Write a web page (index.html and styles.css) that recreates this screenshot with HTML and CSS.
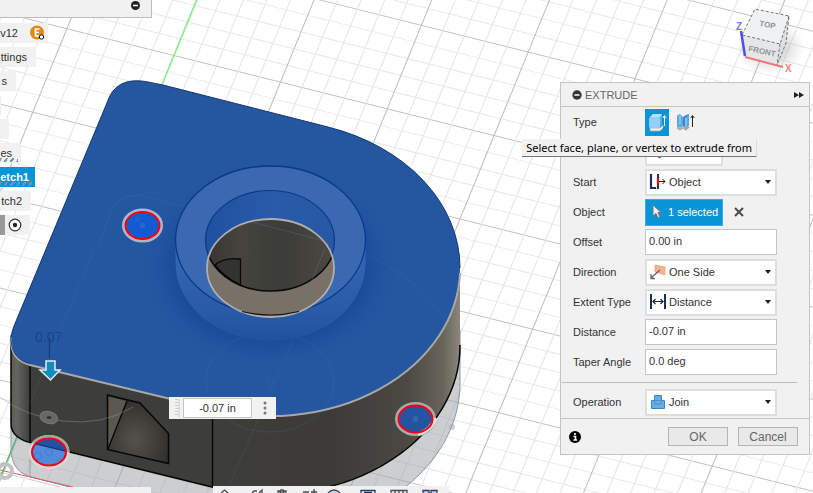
FILE: index.html
```html
<!DOCTYPE html>
<html lang="en">
<head>
<meta charset="utf-8">
<title>Extrude</title>
<link rel="stylesheet" href="styles.css">
</head>
<body>
<main class="workspace">
<svg class="scene" viewBox="0 0 813 493" preserveAspectRatio="xMinYMin slice" aria-hidden="true">
  <defs>
    <g id="across"><path class="minor" d="M-200 20H900M-200 40H900M-200 60H900M-200 80H900"/><path class="major" d="M-200 0H900"/></g>
    <g id="down"><path class="minor" d="M20 -400V700M40 -400V700M60 -400V700M80 -400V700"/><path class="major" d="M0 -400V700"/></g>
    <linearGradient id="side" x1="10" x2="461" y1="0" y2="0" gradientUnits="userSpaceOnUse">
      <stop offset="0" stop-color="#5b5a57"/><stop offset=".015" stop-color="#656460"/><stop offset=".045" stop-color="#3d3d3a"/>
      <stop offset=".45" stop-color="#3d3d39"/><stop offset=".72" stop-color="#3d3b38"/><stop offset=".88" stop-color="#4b4944"/><stop offset=".96" stop-color="#68645b"/><stop offset="1" stop-color="#8d887a"/>
    </linearGradient>
    <linearGradient id="hub" x1="0" x2="0" y1="245" y2="345" gradientUnits="userSpaceOnUse">
      <stop offset="0" stop-color="#3669b2"/><stop offset=".65" stop-color="#285ba8"/><stop offset="1" stop-color="#1e509d"/>
    </linearGradient>
    <linearGradient id="bore" x1="205" x2="335" y1="0" y2="0" gradientUnits="userSpaceOnUse">
      <stop offset="0" stop-color="#2050a0"/><stop offset=".5" stop-color="#295baa"/><stop offset="1" stop-color="#2858a4"/>
    </linearGradient>
    <linearGradient id="wall" x1="207" x2="334" y1="0" y2="0" gradientUnits="userSpaceOnUse">
      <stop offset="0" stop-color="#35342f"/><stop offset=".25" stop-color="#45443f"/><stop offset=".6" stop-color="#3c3c38"/><stop offset="1" stop-color="#4c4943"/>
    </linearGradient>
    <radialGradient id="shade">
      <stop offset=".65" stop-color="#184998"/><stop offset=".75" stop-color="#1b4d9a" stop-opacity=".8"/><stop offset="1" stop-color="#2557a1" stop-opacity="0"/>
    </radialGradient>
    <radialGradient id="pocket" cx=".45" cy=".65" r=".6"><stop offset="0" stop-color="#55524c"/><stop offset="1" stop-color="#302f2b"/></radialGradient>
    <radialGradient id="cubeshade"><stop offset=".3" stop-color="#777" stop-opacity=".35"/><stop offset="1" stop-color="#999" stop-opacity="0"/></radialGradient>
    <clipPath id="hole"><ellipse cx="270.5" cy="268" rx="63.5" ry="49"/></clipPath>
    <clipPath id="above"><path d="M20 430H80V455L20 440Z"/></clipPath>
  </defs>
  <rect width="813" height="493" fill="#fff"/>
  <g transform="matrix(1.068 .267 -.341 .835 66.9 28.7)">
    <use href="#across" y="-400"/><use href="#across" y="-300"/><use href="#across" y="-200"/><use href="#across" y="-100"/><use href="#across"/><use href="#across" y="100"/><use href="#across" y="200"/><use href="#across" y="300"/><use href="#across" y="400"/><use href="#across" y="500"/>
    <use href="#down" x="-100"/><use href="#down"/><use href="#down" x="100"/><use href="#down" x="200"/><use href="#down" x="300"/><use href="#down" x="400"/><use href="#down" x="500"/><use href="#down" x="600"/><use href="#down" x="700"/><use href="#down" x="800"/>
  </g>
  <path d="M197 0L162 85" stroke="#85f585" stroke-width="1.3"/>

  <path d="M11 425V452C13 466 18 473 31 477L212 524A190 148 0 0 0 460 380V330H212Z" fill="#9a9ea2" fill-opacity=".5" stroke="#8799a3"/>
  <path d="M30 441V477M17 436L0 478" stroke="#93a7a0" fill="none"/>
  <path d="M17 437L0 478" stroke="#3cc35c"/><path d="M0 470L73 487" stroke="#d65d68"/>
  <ellipse cx="5" cy="471" rx="7" ry="7" fill="none" stroke="#c3c3c3" stroke-width="4"/>

  <path d="M11 337V424C11 434 20 441 33 443L212 487A190 148 0 0 0 460 345V266L270 300L90 350Z" fill="url(#side)"/>
  <path d="M11 337V424C11 434 20 441 33 443L212 487A190 148 0 0 0 460 345" fill="none" stroke="#050505" stroke-width="1.5"/>
  <path d="M30 365V442M212.500 409V487" stroke="#070707" stroke-width="1.400"/>
  <path d="M11 337C10 354 18 362 30 365L212 409A190 148 0 0 0 460 268A190 148 0 0 0 328 127L163 85L148 82C128 78 115 84 109 98L14 326Q11 331 11 337Z" fill="#2557a1"/>
  <path d="M11 337L14 326L109 98C115 84 128 78 148 82L163 85L328 127A190 148 0 0 1 460 268" fill="none" stroke="#123870"/>
  <path d="M11 337C10 354 18 362 30 365L212 409A190 148 0 0 0 460 273" fill="none" stroke="#a9a8a6" stroke-width="2"/>
  <path d="M11 335C10 353 19 361 30 363.500" fill="none" stroke="#184287"/>
  <ellipse cx="270" cy="266" rx="136" ry="108" fill="url(#shade)"/>
  <g fill="none" stroke="#4a7fad" stroke-opacity=".2">
    <path d="M94 250L30 404M98 245L111 212Q117 195 140 195L365 253Q459 300 455 365M333 250L228 488"/>
    <ellipse cx="270" cy="382" rx="64" ry="50"/><circle cx="270" cy="382" r="3"/>
  </g>
  <path d="M175.500 240V263A95 78 0 0 0 365.500 263V240Z" fill="url(#hub)"/>
  <ellipse cx="270.500" cy="240" rx="95" ry="74" fill="#3a69b2" stroke="#0b3986" stroke-width="1.300"/>
  <ellipse cx="270" cy="240.500" rx="64.500" ry="50" fill="url(#bore)" stroke="#0b3986" stroke-width="1.200"/>
  <g clip-path="url(#hole)">
    <rect x="200" y="210" width="145" height="115" fill="#777168"/>
    <ellipse cx="270.500" cy="241" rx="64.500" ry="50" fill="url(#wall)" stroke="#080808" stroke-width="1.500"/>
    <path d="M215 265Q224 257 240.500 259V285Q225 278 215 265Z" fill="#33332f" stroke="#080808" stroke-width="1.300"/>
    <path d="M248 221L332 243M325 248L300 310" stroke="#66798a" stroke-opacity=".35"/>
  </g>
  <ellipse cx="270.500" cy="268" rx="63.500" ry="49" fill="none" stroke="#b0afad" stroke-width="1.800"/>
  <path d="M242 311.500Q270 318.500 299 311.500" fill="none" stroke="#111" stroke-width="1.200"/>

  <path d="M107.500 395L140 403L168.500 433.500V463.500L107.500 449.500Z" fill="url(#pocket)" stroke="#070707" stroke-width="1.500"/>
  <path d="M108.500 396.500L126.500 401L108.500 447Z" fill="#5b5852"/><path d="M127 401L108 449" stroke="#070707" stroke-width="1.400"/>
  <path d="M0 397Q24 416 63 421T133 407" fill="none" stroke="#8fa093" stroke-opacity=".45"/>
  <ellipse cx="49" cy="417.500" rx="9" ry="6" transform="rotate(15 49 417)" fill="#686865" stroke="#777"/><ellipse cx="49" cy="417.500" rx="2.500" ry="1.500" fill="#333"/>

  <ellipse cx="142.500" cy="225.500" rx="18.500" ry="15" fill="#105bcf" stroke="#aeb5c7" stroke-width="4"/>
  <ellipse cx="142.500" cy="225.500" rx="17" ry="13.500" fill="none" stroke="#f00010" stroke-width="2"/>
  <circle cx="142.500" cy="225.500" r="3" fill="#2467d5"/><circle cx="138" cy="219" r="3" fill="#1c62d3"/>
  <ellipse cx="415.500" cy="419" rx="18.500" ry="15" fill="#2454a0" stroke="#aaa7a5" stroke-width="4"/>
  <path d="M418 434Q432 430 435 418" fill="none" stroke="#e1dfe0" stroke-width="4"/>
  <ellipse cx="415.500" cy="419" rx="17" ry="13.500" fill="none" stroke="#f00010" stroke-width="2"/>
  <circle cx="415.500" cy="419" r="3" fill="#3564ac"/>
  <ellipse cx="49" cy="452" rx="18.500" ry="15" fill="#5289dd" stroke="#ddd6d7" stroke-width="4"/>
  <ellipse cx="49" cy="452" rx="18.500" ry="15" fill="#1f52a3" stroke="#a5a2a0" stroke-width="4" clip-path="url(#above)"/>
  <ellipse cx="49" cy="452" rx="17" ry="13.500" fill="none" stroke="#f00010" stroke-width="2"/>
  <path d="M36 444L65 451" stroke="#142c56"/><circle cx="49" cy="452" r="3.500" fill="none" stroke="#477bc8"/><circle cx="38" cy="456" r="3.500" fill="none" stroke="#477bc8"/>
  <circle cx="452" cy="427" r="3" fill="#aaa" fill-opacity=".6"/>
  <path d="M49.500 338V358" stroke="#173a70" stroke-width="1.200"/>
  <text class="ghost-value" x="35" y="342">0.07</text>
  <path d="M46 361H55V370H60L50.500 380L40 370H46Z" fill="#168bc0" stroke="#e0edf4" stroke-width="1.500"/>

  <ellipse cx="770" cy="47" rx="35" ry="27" fill="url(#cubeshade)"/>
  <path d="M755 9L789 16L780 44L742 35Z" fill="#f0f1f2"/><path d="M742 35L780 44L777 65L745 57Z" fill="#e5e6e8"/><path d="M789 16L786 43L777 65L780 44Z" fill="#dedfe1"/>
  <path d="M742 35L755 9L789 16L786 43L777 65M789 16L780 44L742 35M780 44L777 65" fill="none" stroke="#666" stroke-width=".9" stroke-dasharray="3 2"/>
  <path d="M741 31L745 56" stroke="#4f4ff0" stroke-width="2.500"/><path d="M745 57L783 67" stroke="#ed7777" stroke-width="2"/>
  <text class="cube-label" transform="translate(759 26) rotate(10)">TOP</text>
  <text class="cube-label" transform="translate(748 51) rotate(12)">FRONT</text>
  <text class="axis axis-z" x="736" y="30">Z</text><text class="axis axis-x" x="785" y="72">X</text>
</svg>

<header class="browser-bar"><button class="plain" aria-label="Collapse browser"><svg width="11" height="11" viewBox="0 0 11 11"><circle cx="5.500" cy="5.500" r="4.500" fill="#222"/><path d="M3 5.500H8" stroke="#fff" stroke-width="1.500"/></svg></button></header>
<ul class="tree">
  <li class="node w-root">v12<svg width="16" height="16" viewBox="0 0 16 16"><circle cx="7" cy="7.500" r="7" fill="#e28a1c"/><path d="M9.500 4H5.500V11H9.500M5.500 7.500H9" stroke="#fff" stroke-width="1.700" fill="none"/><circle cx="11.500" cy="12" r="2.200" fill="#fff" stroke="#111"/></svg></li>
  <li class="node w-settings">ttings</li>
  <li class="node w-views">s</li>
  <li class="node w-origin"></li>
  <li class="node w-bodies"></li>
  <li class="node w-sketches hatched">es</li>
  <li class="node w-sketch1 selected hatched">etch1</li>
  <li class="node w-sketch2">tch2</li>
  <li class="node w-active"><svg width="14" height="14" viewBox="0 0 14 14"><circle cx="7" cy="7" r="5.800" fill="#fff" stroke="#333" stroke-width="1.200"/><circle cx="7" cy="7" r="2.200" fill="#222"/></svg></li>
</ul>
<footer class="comments-bar"></footer>

<div class="value-box"><span class="grip"></span><input type="text" value="-0.07 in" aria-label="Extrude distance"><button class="plain" aria-label="More options"><svg width="4" height="14" viewBox="0 0 4 14" fill="#777"><circle cx="2" cy="2" r="1.500"/><circle cx="2" cy="7" r="1.500"/><circle cx="2" cy="12" r="1.500"/></svg></button></div>

<nav class="view-tools" aria-label="View tools">
<svg width="236" height="7" viewBox="0 0 236 7" fill="none" stroke="#444b55" stroke-width="1.300"><path d="M8 7L11.500 4L15 7M39 7L41 5H44M46 7L49 4V7M65 7V5H67V7M68 7V4H70V7M71 7V5H73V7M90 6H96M101 3V7M98 6H104"/><path d="M115 7Q121 1 127 7" fill="#b9dbe8"/><path d="M148 7V4.500H162V7M151 6.500H159" stroke="#283c6b"/><path d="M178 7V4.500H194V7M182 4V7M186 4V7M190 4V7"/><path d="M210 7V4.500H216V7M218 7V4.500H224V7" stroke="#283c6b" fill="#b9d4ed"/></svg>
</nav>

<form class="dialog">
  <header class="dialog-head"><svg width="10" height="10" viewBox="0 0 10 10"><circle cx="5" cy="5" r="4.700" fill="#333"/><path d="M2.500 5H7.500" stroke="#fff" stroke-width="1.500"/></svg><h1>EXTRUDE</h1><button type="button" class="plain" aria-label="Expand"><svg width="12" height="8" viewBox="0 0 12 8" fill="#222"><path d="M1 1L6 4L1 7ZM6 1L11 4L6 7Z"/></svg></button></header>
  <div class="fields">
    <div class="row"><span class="label">Type</span><div class="types">
      <button type="button" class="type on" aria-label="Extrude"><svg width="20" height="22" viewBox="0 0 20 22"><path d="M3 17H13L16 14V17L13 20H3Z" fill="#f5eee7" stroke="#aaa" stroke-width=".6"/><path d="M3 6L6 3H15V14L12 17H3Z" fill="#5ba8e3"/><rect x="2" y="6" width="11" height="11" rx="1.500" fill="#92cdfb"/><path d="M3 6L6 3H15L13 6Z" fill="#b7dfff"/><path d="M17.500 15V5M15.800 7L17.500 4.500L19.200 7" stroke="#fff" fill="none"/></svg></button>
      <button type="button" class="type" aria-label="Thin extrude"><svg width="20" height="22" viewBox="0 0 20 22"><path d="M2 16.500L5 18.500L8 16.500L11 18.500L14 15.500" stroke="#aaa" stroke-width="1.800" fill="none"/><path d="M2 5L5 3V14L2 16ZM8 6L11 4L14 3V14L11 17L8 15Z" fill="#3987c4"/><path d="M5 3L8 6V15L5 17L2 15V5ZM10 7L14 3V13L10 17Z" fill="#5ea6dc"/><path d="M5 4V14M11 7V16" stroke="#96cff6" stroke-width="1.300"/><path d="M17.500 16V5M15.800 7L17.500 4.500L19.200 7" stroke="#222" fill="none"/></svg></button></div></div>
    <div class="row"><span></span><button type="button" class="pick" aria-label="Profiles"><svg width="10" height="16" viewBox="0 0 10 16"><path d="M1 1V12L4 9.500L6 14L8 13L6 8.500H9Z" fill="#ddd" stroke="#555"/></svg></button></div>
    <div class="row"><label for="start">Start</label><div class="combo"><svg width="18" height="18" viewBox="0 0 18 18"><path d="M2 1V15H7" stroke="#19305c" stroke-width="2.200" fill="none"/><path d="M9 1V16" stroke="#19305c" stroke-width="2"/><path d="M9 5V12" stroke="#f00" stroke-width="2.200"/><path d="M10 8.500H16M13.500 6L16 8.500L13.500 11" stroke="#222" fill="none"/></svg><select id="start"><option>Object</option></select></div></div>
    <div class="row"><span class="label">Object</span><div class="picked"><button type="button" class="pick active"><svg width="10" height="16" viewBox="0 0 10 16"><path d="M1 1V12L4 9.500L6 14L8 13L6 8.500H9Z" fill="#eee" stroke="#777"/></svg>1 selected</button><button type="button" class="plain" aria-label="Clear selection"><svg width="10" height="10" viewBox="0 0 10 10"><path d="M1 1L9 9M9 1L1 9" stroke="#4c4c4c" stroke-width="2"/></svg></button></div></div>
    <div class="row"><label for="offset">Offset</label><input id="offset" type="text" value="0.00 in"></div>
    <div class="row"><label for="direction">Direction</label><div class="combo"><svg width="18" height="18" viewBox="0 0 18 18"><path d="M6 2L16 4V12L6 9Z" fill="#f2b58c" stroke="#e2a172" stroke-width=".7"/><path d="M11 7L2 15M2 11V15.500H6" stroke="#666" stroke-width="1.300" fill="none"/></svg><select id="direction"><option>One Side</option></select></div></div>
    <div class="row"><label for="extent">Extent Type</label><div class="combo"><svg width="18" height="18" viewBox="0 0 18 18"><path d="M2 1V16M16 1V16" stroke="#19305c" stroke-width="2"/><path d="M4 8.500H14M6.500 6L4 8.500L6.500 11M11.500 6L14 8.500L11.500 11" stroke="#222" stroke-width="1.200" fill="none"/></svg><select id="extent"><option>Distance</option></select></div></div>
    <div class="row"><label for="distance">Distance</label><input id="distance" type="text" value="-0.07 in"></div>
    <div class="row"><label for="taper">Taper Angle</label><input id="taper" type="text" value="0.0 deg"></div>
    <hr>
    <div class="row"><label for="operation">Operation</label><div class="combo"><svg width="18" height="18" viewBox="0 0 18 18"><path d="M5.500 2.500H12.500V7.500H15.500V15.500H2.500V7.500H5.500Z" fill="#66aee6" stroke="#3c86bd"/><path d="M5.500 7.500V11H12.500V7.500H5.500" stroke="#4b92c8" fill="none"/></svg><select id="operation"><option>Join</option></select></div></div>
  </div>
  <footer class="dialog-foot"><svg width="12" height="12" viewBox="0 0 12 12"><circle cx="6" cy="6" r="6" fill="#000"/><path d="M6 2V4M4.500 5.500H6.500V9M4.500 9H8" stroke="#fff" stroke-width="1.600" fill="none"/></svg><button type="button">OK</button><button type="button">Cancel</button></footer>
</form>
<div class="tooltip" role="tooltip">Select face, plane, or vertex to extrude from</div>
</main>
</body>
</html>
```
FILE: styles.css
```css
* { box-sizing: border-box; }
body { margin: 0; font: 11px/16px "Liberation Sans", Arial, sans-serif; color: #333; }
button, input, select { font: inherit; color: inherit; margin: 0; }
svg { display: block; flex: none; }
.workspace { position: relative; height: 100vh; overflow: hidden; background: #fff; }
.scene { position: absolute; inset: 0; width: 100%; height: 100%; }
.minor { stroke: #e6e6e6; stroke-width: 1; }
.major { stroke: #c2c2c2; stroke-width: 1; }
.ghost-value { font-size: 14px; fill: #184486; }
.cube-label { font-size: 8px; font-weight: bold; fill: #92959a; }
.axis { font-size: 10px; font-weight: bold; }
.axis-z { fill: #7777f4; }
.axis-x { fill: #ee8585; }
.plain { display: flex; border: 0; padding: 0; background: none; }

.browser-bar { position: absolute; top: 0; left: 0; width: 152px; height: 18px; padding-right: 10px; display: flex; justify-content: flex-end; align-items: flex-start; background: #f1f1f1; border: solid #bdbdbd; border-width: 0 1px 1px 0; }
.tree { position: absolute; top: 23px; left: 0; margin: 0; padding: 0; list-style: none; display: grid; gap: 4px; justify-items: start; }
.node { position: relative; height: 20px; display: flex; align-items: center; justify-content: flex-end; gap: 12px; background: #f1f1f1; white-space: nowrap; }
.w-root { width: 48px; padding-right: 2px; }
.w-settings { width: 36px; padding-right: 9px; }
.w-views { width: 16px; padding-right: 9px; }
.w-origin { width: 1px; }
.w-bodies { width: 9px; }
.w-sketches { width: 21px; padding-right: 9px; }
.w-sketch1 { width: 35px; padding-right: 6px; }
.w-sketch2 { width: 31px; padding-right: 9px; }
.w-active { width: 30px; padding-right: 8px; border-left: 5px solid #999; }
.selected { background: #0696d7; color: #fff; font-weight: bold; }
.hatched::after { content: ""; position: absolute; left: 0; right: 3px; bottom: 1px; height: 4px; background: repeating-linear-gradient(125deg, #8190ad 0 2px, transparent 2px 5px); }
.comments-bar { position: absolute; left: 0; bottom: 0; width: 151px; height: 6px; background: #f1f1f1; }
.view-tools { position: absolute; left: 213px; bottom: 0; background: #f1f1f1; }

.value-box { position: absolute; left: 169px; top: 397px; height: 22px; padding: 1px 9px 1px 3px; display: flex; align-items: center; gap: 3px; background: #f1f1f1; }
.value-box input { width: 69px; height: 20px; padding: 0; text-align: center; border: 1px solid #c4c4c4; background: #fff; }
.value-box .plain { padding-left: 8px; }
.grip { width: 8px; height: 18px; background: repeating-linear-gradient(#ccc 0 1px, transparent 1px 3px) 3px 0 / 3px 100% no-repeat; border-right: 2px solid #ddd; }

.dialog { position: absolute; top: 82px; right: 3px; width: 250px; background: #f1f1f1; border: 1px solid #c4c4c4; }
.dialog-head { height: 24px; padding: 0 4px 0 11px; display: flex; align-items: center; gap: 3px; border-bottom: 1px solid #c4c4c4; }
.dialog-head h1 { flex: 1; margin: 0; font-size: 11px; font-weight: normal; color: #666; }
.row { height: 30px; padding: 0 32px 0 12px; display: grid; grid-template-columns: 72px 1fr; align-items: center; }
.row > input { width: 100%; height: 26px; padding: 0 3px 2px; border: 1px solid #c4c4c4; background: #fff; }
.types, .picked { display: flex; align-items: center; gap: 4px; }
.picked { gap: 11px; }
.type { display: grid; place-items: center; width: 24px; height: 27px; padding: 0; border: 0; background: none; }
.type.on { background: #0696d7; }
.pick { display: flex; align-items: center; gap: 6px; width: 78px; height: 27px; padding: 0 6px; border: 2px solid #ddd; background: #fff; white-space: nowrap; }
.pick.active { border: 1px solid #2eaee5; background: #0696d7; color: #fff; }
.combo { position: relative; height: 27px; padding-left: 2px; display: flex; align-items: center; background: #fff; border: 2px solid #dedede; }
.combo select { flex: 1; min-width: 0; height: 23px; padding: 0 2px; border: 0; background: none; appearance: none; }
.combo::after { content: ""; position: absolute; right: 4px; top: 9px; border: solid transparent; border-width: 4px 3px 0; border-top-color: #222; }
hr { margin: 5px 12px 4px 1px; border: 0; border-top: 1px solid #bdbdbd; }
.dialog-foot { height: 36px; margin-top: 1px; padding: 0 11px 0 8px; display: flex; align-items: center; gap: 10px; border-top: 1px solid #c4c4c4; }
.dialog-foot svg { margin-right: auto; }
.dialog-foot button { width: 60px; height: 19px; padding: 0; line-height: 16px; border: 1px solid #b5b5b5; background: #e9e9e9; color: #666; font-size: 12px; }
.tooltip { position: absolute; top: 139px; right: 56px; padding: 0 4px; height: 18px; line-height: 18px; font-family: "Noto Sans", sans-serif; font-size: 11px; color: #000; background: #f1f1f1; border: solid #ddd; border-width: 0 1px 1px 0; border-bottom-color: #777; white-space: nowrap; }
```
